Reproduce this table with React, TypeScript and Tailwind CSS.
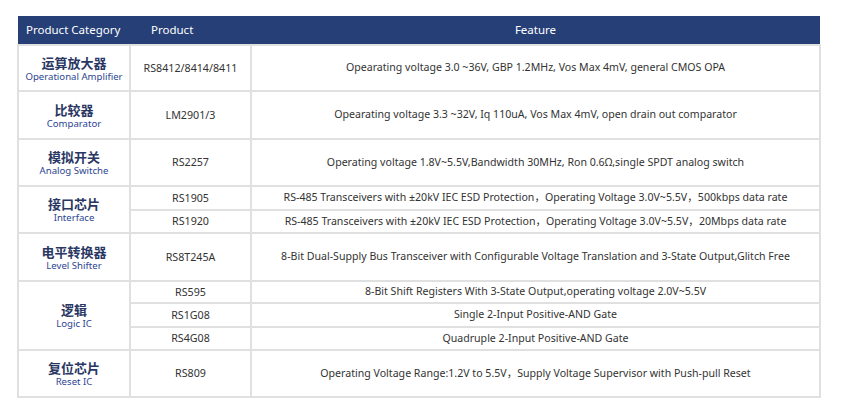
import React from "react";

type Row = { product: string; feature: string; h: number };
type Group = { zh: string; en: string; rows: Row[] };

const groups: Group[] = [
  {
    zh: "运算放大器",
    en: "Operational Amplifier",
    rows: [
      {
        product: "RS8412/8414/8411",
        feature: "Opearating voltage 3.0 ~36V, GBP 1.2MHz,  Vos Max 4mV, general CMOS OPA",
        h: 46,
      },
    ],
  },
  {
    zh: "比较器",
    en: "Comparator",
    rows: [
      {
        product: "LM2901/3",
        feature: "Opearating voltage 3.3 ~32V, Iq 110uA,  Vos Max 4mV, open drain out comparator",
        h: 48,
      },
    ],
  },
  {
    zh: "模拟开关",
    en: "Analog Switche",
    rows: [
      {
        product: "RS2257",
        feature: "Operating voltage 1.8V~5.5V,Bandwidth 30MHz, Ron 0.6Ω,single SPDT analog switch",
        h: 47,
      },
    ],
  },
  {
    zh: "接口芯片",
    en: "Interface",
    rows: [
      {
        product: "RS1905",
        feature: "RS-485 Transceivers with ±20kV IEC ESD Protection，Operating Voltage 3.0V~5.5V，500kbps data rate",
        h: 24,
      },
      {
        product: "RS1920",
        feature: "RS-485 Transceivers with ±20kV IEC ESD Protection，Operating Voltage 3.0V~5.5V，20Mbps data rate",
        h: 23,
      },
    ],
  },
  {
    zh: "电平转换器",
    en: "Level Shifter",
    rows: [
      {
        product: "RS8T245A",
        feature: "8-Bit Dual-Supply Bus Transceiver with Configurable Voltage Translation and 3-State Output,Glitch Free",
        h: 48,
      },
    ],
  },
  {
    zh: "逻辑",
    en: "Logic IC",
    rows: [
      { product: "RS595", feature: "8-Bit Shift Registers With 3-State Output,operating voltage 2.0V~5.5V", h: 22 },
      { product: "RS1G08", feature: "Single 2-Input Positive-AND Gate", h: 24 },
      { product: "RS4G08", feature: "Quadruple 2-Input Positive-AND Gate", h: 23 },
    ],
  },
  {
    zh: "复位芯片",
    en: "Reset IC",
    rows: [
      {
        product: "RS809",
        feature: "Operating Voltage Range:1.2V to 5.5V，Supply Voltage Supervisor with Push-pull Reset",
        h: 47,
      },
    ],
  },
];

export default function App() {
  return (
    <div
      className="w-[846px] h-[415px] bg-white pt-[16px] pl-[17px]"
      style={{ fontFamily: '"Noto Sans", "Noto Sans CJK SC", sans-serif' }}
    >
      <table className="w-[804px] border-collapse table-fixed">
        <colgroup>
          <col className="w-[112px]" />
          <col className="w-[121px]" />
          <col />
        </colgroup>
        <thead>
          <tr className="h-[29px] bg-[#263f77] text-white text-[11.5px]">
            <th className="font-normal text-left pl-[8px]">Product Category</th>
            <th className="font-normal text-left pl-[21px]">Product</th>
            <th className="font-normal text-center">Feature</th>
          </tr>
        </thead>
        <tbody>
          {groups.map((g) =>
            g.rows.map((r, i) => (
              <tr key={g.zh + r.product} style={{ height: r.h }}>
                {i === 0 && (
                  <td
                    rowSpan={g.rows.length}
                    className="border-2 border-[#e0e0e0] text-center align-middle p-0"
                  >
                    <div className="text-[13px] leading-[16px] font-semibold text-[#2a3763]">{g.zh}</div>
                    <div className="text-[9.6px] leading-[11px] text-[#2c4591]">{g.en}</div>
                  </td>
                )}
                <td className="border-2 border-[#e0e0e0] text-center align-middle text-[10.7px] text-[#333] p-0">
                  {r.product}
                </td>
                <td className="border-2 border-[#e0e0e0] text-center align-middle text-[10.6px] text-[#333] p-0 whitespace-nowrap">
                  {r.feature}
                </td>
              </tr>
            ))
          )}
        </tbody>
      </table>
    </div>
  );
}
